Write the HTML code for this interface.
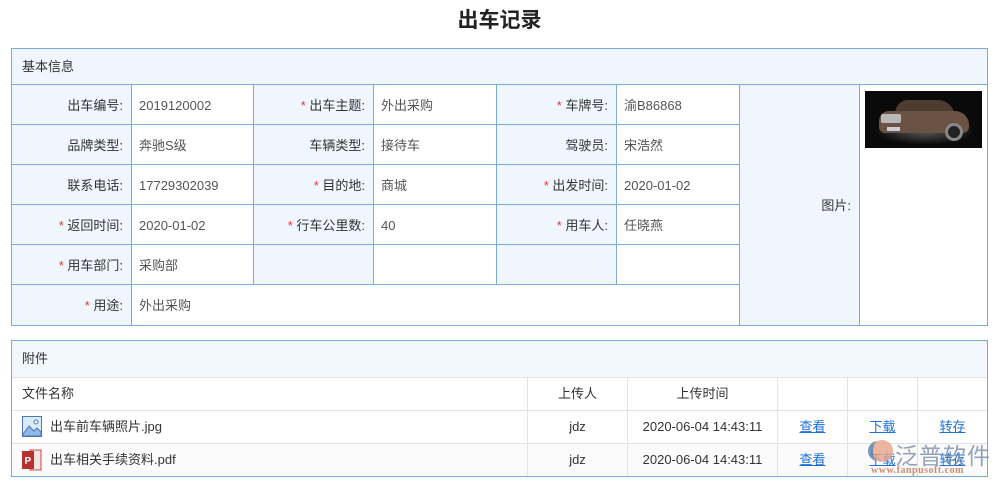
<!DOCTYPE html>
<html><head><meta charset="utf-8"><style>
*{margin:0;padding:0;box-sizing:border-box}
body{width:999px;height:486px;background:#fff;position:relative;overflow:hidden;font-family:"Liberation Sans","Noto Sans CJK SC",sans-serif;font-size:13px;color:#333}
.a{position:absolute}
.title{left:0;width:999px;top:4px;text-align:center;font-size:21px;font-weight:bold;color:#222}
.c{position:absolute;border-right:1px solid #7aaad9;border-bottom:1px solid #7aaad9;line-height:41px;white-space:nowrap}
.l{background:#eff6fe;text-align:right;padding-right:8px;color:#333}
.v{background:#fff;padding-left:7px;color:#555}
.s{color:#e33}
.t{position:absolute;border-right:1px solid #e3e3e3;border-bottom:1px solid #e3e3e3;line-height:32px;text-align:center;white-space:nowrap}
.lk{color:#1a6fd8;text-decoration:underline}
</style></head><body>
<div class="a title">出车记录</div>

<div class="a" style="left:11px;top:48px;width:977px;height:278px;border:1px solid #7aaad9;border-right:none;border-bottom:none"></div>
<div class="a" style="left:12px;top:49px;width:976px;height:36px;background:#eff6fe;border-bottom:1px solid #7aaad9;border-right:1px solid #7aaad9;line-height:35px;padding-left:10px;color:#333">基本信息</div>

<div class="c l" style="left:12px;top:85px;width:120px;height:40px">出车编号:</div>
<div class="c v" style="left:132px;top:85px;width:122px;height:40px">2019120002</div>
<div class="c l" style="left:254px;top:85px;width:120px;height:40px"><span class="s">* </span>出车主题:</div>
<div class="c v" style="left:374px;top:85px;width:123px;height:40px">外出采购</div>
<div class="c l" style="left:497px;top:85px;width:120px;height:40px"><span class="s">* </span>车牌号:</div>
<div class="c v" style="left:617px;top:85px;width:123px;height:40px">渝B86868</div>

<div class="c l" style="left:12px;top:125px;width:120px;height:40px">品牌类型:</div>
<div class="c v" style="left:132px;top:125px;width:122px;height:40px">奔驰S级</div>
<div class="c l" style="left:254px;top:125px;width:120px;height:40px">车辆类型:</div>
<div class="c v" style="left:374px;top:125px;width:123px;height:40px">接待车</div>
<div class="c l" style="left:497px;top:125px;width:120px;height:40px">驾驶员:</div>
<div class="c v" style="left:617px;top:125px;width:123px;height:40px">宋浩然</div>

<div class="c l" style="left:12px;top:165px;width:120px;height:40px">联系电话:</div>
<div class="c v" style="left:132px;top:165px;width:122px;height:40px">17729302039</div>
<div class="c l" style="left:254px;top:165px;width:120px;height:40px"><span class="s">* </span>目的地:</div>
<div class="c v" style="left:374px;top:165px;width:123px;height:40px">商城</div>
<div class="c l" style="left:497px;top:165px;width:120px;height:40px"><span class="s">* </span>出发时间:</div>
<div class="c v" style="left:617px;top:165px;width:123px;height:40px">2020-01-02</div>

<div class="c l" style="left:12px;top:205px;width:120px;height:40px"><span class="s">* </span>返回时间:</div>
<div class="c v" style="left:132px;top:205px;width:122px;height:40px">2020-01-02</div>
<div class="c l" style="left:254px;top:205px;width:120px;height:40px"><span class="s">* </span>行车公里数:</div>
<div class="c v" style="left:374px;top:205px;width:123px;height:40px">40</div>
<div class="c l" style="left:497px;top:205px;width:120px;height:40px"><span class="s">* </span>用车人:</div>
<div class="c v" style="left:617px;top:205px;width:123px;height:40px">任晓燕</div>

<div class="c l" style="left:12px;top:245px;width:120px;height:40px"><span class="s">* </span>用车部门:</div>
<div class="c v" style="left:132px;top:245px;width:122px;height:40px">采购部</div>
<div class="c l" style="left:254px;top:245px;width:120px;height:40px"></div>
<div class="c v" style="left:374px;top:245px;width:123px;height:40px"></div>
<div class="c l" style="left:497px;top:245px;width:120px;height:40px"></div>
<div class="c v" style="left:617px;top:245px;width:123px;height:40px"></div>

<div class="c l" style="left:12px;top:285px;width:120px;height:41px"><span class="s">* </span>用途:</div>
<div class="c v" style="left:132px;top:285px;width:608px;height:41px">外出采购</div>

<div class="c l" style="left:740px;top:85px;width:120px;height:241px;line-height:242px">图片:</div>
<div class="c v" style="left:860px;top:85px;width:128px;height:241px"></div>
<div class="a" style="left:865px;top:91px;width:117px;height:57px;background:#0a0a0a;overflow:hidden">
<div class="a" style="left:10px;top:28px;width:100px;height:26px;border-radius:50%;background:radial-gradient(ellipse,#555 0%,#0a0a0a 70%)"></div>
<div class="a" style="left:30px;top:9px;width:60px;height:20px;border-radius:20px 26px 4px 4px;background:#4e3c30"></div>
<div class="a" style="left:14px;top:20px;width:90px;height:22px;border-radius:10px 14px 6px 6px;background:#6b5343"></div>
<div class="a" style="left:16px;top:23px;width:20px;height:9px;background:#b8b8b8;border-radius:2px"></div>
<div class="a" style="left:22px;top:36px;width:13px;height:4px;background:#ccd"></div>
<div class="a" style="left:80px;top:32px;width:18px;height:18px;border-radius:50%;background:#222;border:3px solid #888"></div>
</div>

<div class="a" style="left:11px;top:340px;width:977px;height:137px;border:1px solid #7aaad9"></div>
<div class="a" style="left:12px;top:341px;width:975px;height:37px;background:#f2f7fe;border-bottom:1px solid #e3e3e3;line-height:35px;padding-left:10px">附件</div>
<div class="t" style="left:12px;top:378px;width:516px;height:33px;text-align:left;padding-left:10px">文件名称</div>
<div class="t" style="left:528px;top:378px;width:100px;height:33px">上传人</div>
<div class="t" style="left:628px;top:378px;width:150px;height:33px">上传时间</div>
<div class="t" style="left:778px;top:378px;width:70px;height:33px"></div>
<div class="t" style="left:848px;top:378px;width:70px;height:33px"></div>
<div class="t" style="left:918px;top:378px;width:69px;height:33px;border-right:none"></div>

<div class="t" style="left:12px;top:411px;width:516px;height:33px;text-align:left;padding-left:38px">出车前车辆照片.jpg</div>
<svg class="a" style="left:22px;top:416px" width="20" height="22" viewBox="0 0 20 22"><rect x="0.5" y="0.5" width="19" height="20" fill="#dbeafb" stroke="#4a78b5"/><circle cx="14" cy="6" r="2" fill="#fff" stroke="#4a78b5"/><path d="M1 18 L7 10 L12 15 L15 12 L19 16 L19 20 L1 20Z" fill="#8fb8e6" stroke="#4a78b5"/></svg>
<div class="t" style="left:528px;top:411px;width:100px;height:33px">jdz</div>
<div class="t" style="left:628px;top:411px;width:150px;height:33px">2020-06-04 14:43:11</div>
<div class="t" style="left:778px;top:411px;width:70px;height:33px"><span class="lk">查看</span></div>
<div class="t" style="left:848px;top:411px;width:70px;height:33px"><span class="lk">下载</span></div>
<div class="t" style="left:918px;top:411px;width:69px;height:33px;border-right:none"><span class="lk">转存</span></div>

<div class="t" style="left:12px;top:444px;width:516px;height:32px;text-align:left;padding-left:38px;background:#fbfbfb;border-bottom:none">出车相关手续资料.pdf</div>
<svg class="a" style="left:22px;top:449px" width="20" height="22" viewBox="0 0 20 22"><rect x="8" y="1" width="11" height="20" fill="#f3e3e3" stroke="#c44"/><rect x="0" y="2" width="12" height="18" fill="#b8312f"/><text x="2.5" y="15" font-size="10" font-weight="bold" fill="#fff" font-family="Liberation Sans">P</text></svg>
<div class="t" style="left:528px;top:444px;width:100px;height:32px;background:#fbfbfb;border-bottom:none">jdz</div>
<div class="t" style="left:628px;top:444px;width:150px;height:32px;background:#fbfbfb;border-bottom:none">2020-06-04 14:43:11</div>
<div class="t" style="left:778px;top:444px;width:70px;height:32px;background:#fbfbfb;border-bottom:none"><span class="lk">查看</span></div>
<div class="t" style="left:848px;top:444px;width:70px;height:32px;background:#fbfbfb;border-bottom:none"><span class="lk">下载</span></div>
<div class="t" style="left:918px;top:444px;width:69px;height:32px;background:#fbfbfb;border-right:none;border-bottom:none"><span class="lk">转存</span></div>

<div class="a" style="left:871px;top:440px;width:22px;height:22px;border-radius:50%;background:#e8a488;opacity:.8"></div>
<div class="a" style="left:868px;top:441px;width:12px;height:20px;border-left:5px solid #5a7fa8;border-radius:10px 0 0 10px;opacity:.8"></div>
<div class="a" style="left:895px;top:437px;font-size:23px;color:#6f86a4;opacity:.75;letter-spacing:1px">泛普软件</div>
<div class="a" style="left:871px;top:465px;font-size:10px;color:#c8785a;font-family:'Liberation Serif',serif;font-weight:bold;letter-spacing:.5px;opacity:.85">www.fanpusoft.com</div>
</body></html>
